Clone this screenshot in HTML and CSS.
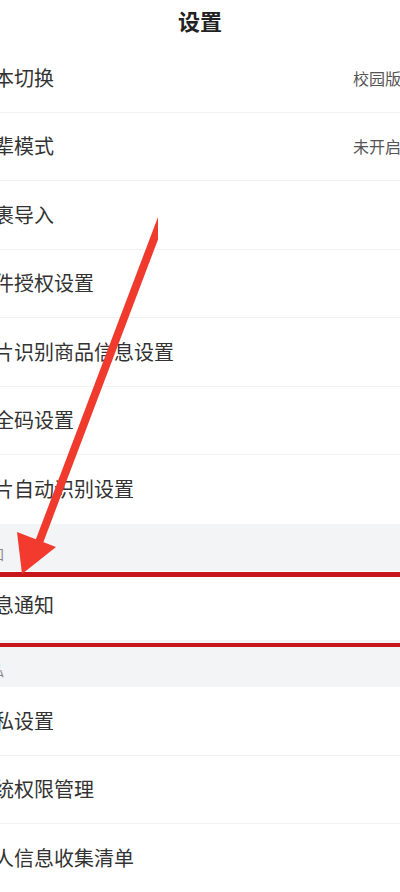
FILE: index.html
```html
<!DOCTYPE html>
<html lang="zh-CN">
<head>
  <meta charset="UTF-8" />
  <meta name="viewport" content="width=device-width, initial-scale=1.0" />
  <title>设置</title>
  <link rel="stylesheet" href="styles.css">
</head>
<body>
  <div class="page">
    <div class="title">设置</div>

    <div class="row"><span class="label">版本切换</span><span class="value">校园版本 ›</span></div>
    <div class="row"><span class="label">长辈模式</span><span class="value">未开启 ›</span></div>
    <div class="row"><span class="label">包裹导入</span></div>
    <div class="row"><span class="label">插件授权设置</span></div>
    <div class="row"><span class="label">图片识别商品信息设置</span></div>
    <div class="row"><span class="label">安全码设置</span></div>
    <div class="row last"><span class="label">图片自动识别设置</span></div>

    <div class="section">通知</div>
    <div class="row last"><span class="label">消息通知</span></div>

    <div class="section">隐私</div>
    <div class="row"><span class="label">隐私设置</span></div>
    <div class="row"><span class="label">系统权限管理</span></div>
    <div class="row"><span class="label">个人信息收集清单</span></div>

    <!-- annotation drawn over the screenshot -->
    <div class="mark-box"></div>
    <svg class="mark-arrow" width="200" height="600" viewBox="0 0 200 600">
      <line x1="205" y1="215" x2="80" y2="545" stroke="#ef3a2d" stroke-width="8" stroke-linecap="butt" />
      <polygon points="64,574 59,532 98,547" fill="#f23b2e" />
    </svg>
  </div>
</body>
</html>
```

FILE: styles.css
```css
body {
  margin: 0;
  overflow: hidden;
  background: #fff;
  font-family: "Noto Sans CJK SC", "Noto Sans", sans-serif;
  color: #333;
}
.page {
  position: relative;
  margin-left: -42px;
  width: 484px;
}
.title {
  height: 44px;
  display: flex;
  align-items: center;
  justify-content: center;
  font-size: 22px;
  font-weight: bold;
  color: #222;
  padding-bottom: 4px;
  box-sizing: border-box;
}
.row {
  height: 68.5px;
  box-sizing: border-box;
  display: flex;
  align-items: center;
  justify-content: space-between;
  padding: 0 16px;
  border-bottom: 1px solid #f1f1f1;
}
.row.last {
  border-bottom: none;
}
.label {
  font-size: 20px;
  line-height: 24px;
}
.value {
  font-size: 16px;
  color: #555;
  width: 73px;
  white-space: nowrap;
}
.section {
  height: 47.5px;
  box-sizing: border-box;
  background: #f3f4f6;
  display: flex;
  align-items: flex-end;
  padding: 0 0 7px 18px;
  font-size: 14px;
  color: #888;
}
.mark-box {
  position: absolute;
  left: 0;
  right: 0;
  top: 572px;
  height: 75px;
  box-sizing: border-box;
  border-top: 5px solid #c8161d;
  border-bottom: 4px solid #c8161d;
}
.mark-arrow {
  position: absolute;
  left: 0;
  top: 0;
}
```
